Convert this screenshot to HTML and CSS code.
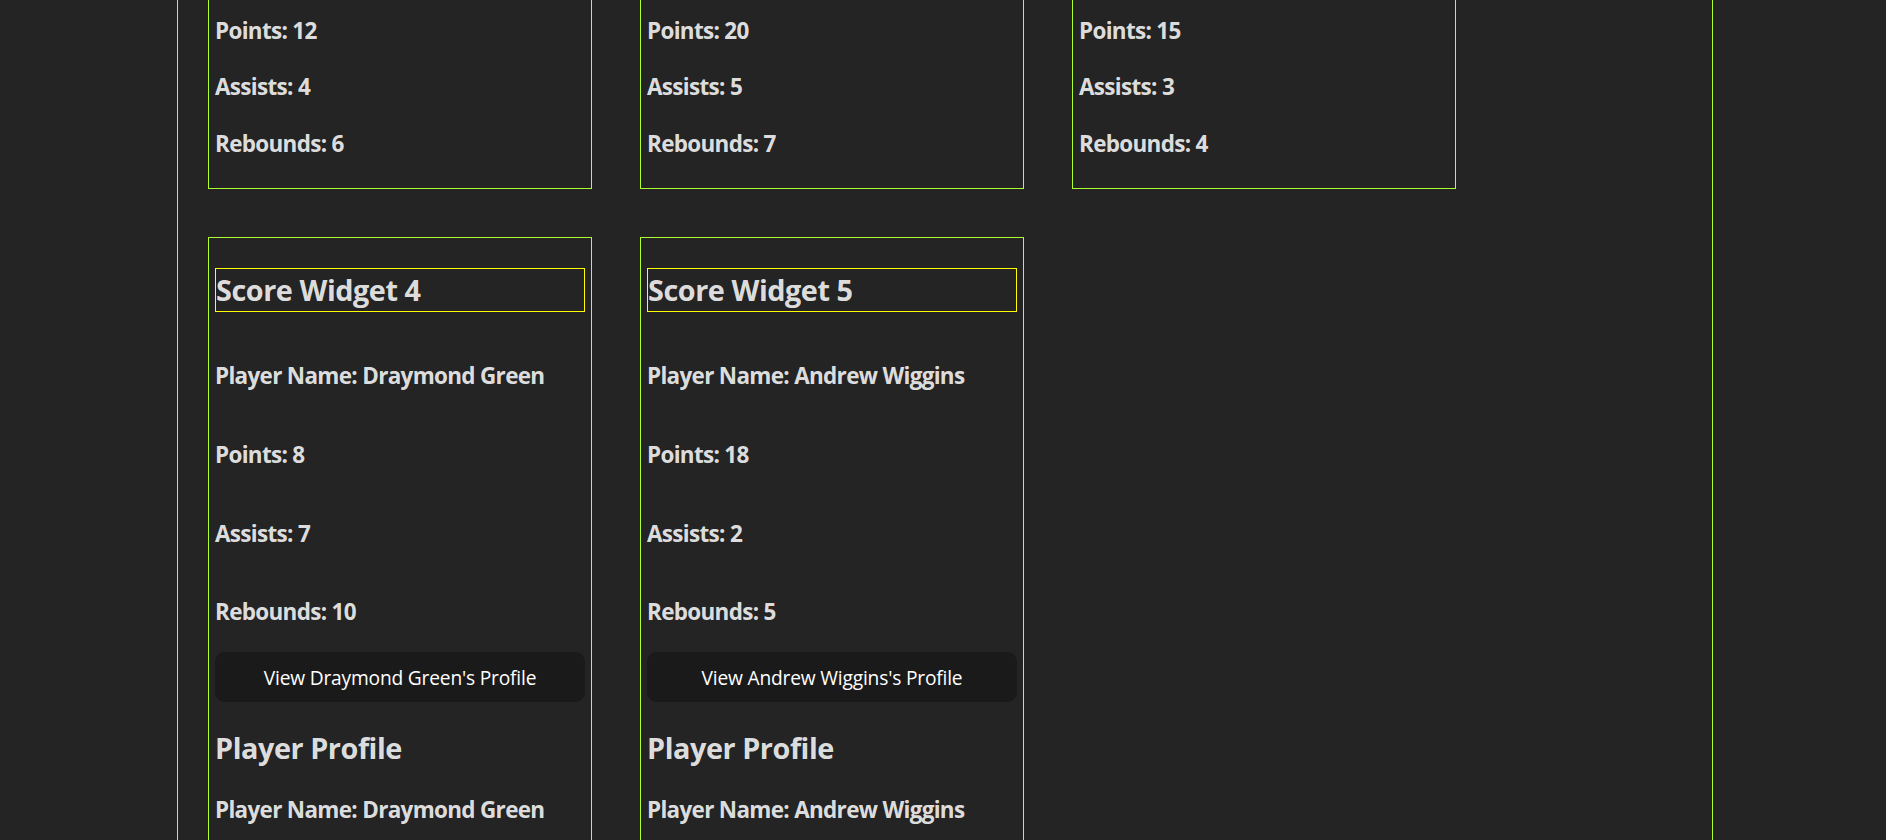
FILE: index.html
```html
<!DOCTYPE html>
<html lang="en">
<head>
<meta charset="utf-8">
<title>Score Widgets</title>
<link rel="stylesheet" href="styles.css">
</head>
<body>
<div class="app">
  <div class="grid">
    <div class="card">
      <h2 class="title">Score Widget 1</h2>
      <h3 class="stat">Player Name: Stephen Curry</h3>
      <h3 class="stat">Points: 12</h3>
      <h3 class="stat">Assists: 4</h3>
      <h3 class="stat">Rebounds: 6</h3>
    </div>
    <div class="card">
      <h2 class="title">Score Widget 2</h2>
      <h3 class="stat">Player Name: Klay Thompson</h3>
      <h3 class="stat">Points: 20</h3>
      <h3 class="stat">Assists: 5</h3>
      <h3 class="stat">Rebounds: 7</h3>
    </div>
    <div class="card">
      <h2 class="title">Score Widget 3</h2>
      <h3 class="stat">Player Name: Jordan Poole</h3>
      <h3 class="stat">Points: 15</h3>
      <h3 class="stat">Assists: 3</h3>
      <h3 class="stat">Rebounds: 4</h3>
    </div>
    <div class="card card-open">
      <h2 class="title">Score Widget 4</h2>
      <h3 class="stat">Player Name: Draymond Green</h3>
      <h3 class="stat">Points: 8</h3>
      <h3 class="stat">Assists: 7</h3>
      <h3 class="stat">Rebounds: 10</h3>
      <button class="profile-btn" type="button">View Draymond Green's Profile</button>
      <div class="profile">
        <h2 class="profile-title">Player Profile</h2>
        <h3 class="profile-stat">Player Name: Draymond Green</h3>
        <h3 class="profile-stat">Points: 8</h3>
        <h3 class="profile-stat">Assists: 7</h3>
        <h3 class="profile-stat">Rebounds: 10</h3>
      </div>
    </div>
    <div class="card card-open">
      <h2 class="title">Score Widget 5</h2>
      <h3 class="stat">Player Name: Andrew Wiggins</h3>
      <h3 class="stat">Points: 18</h3>
      <h3 class="stat">Assists: 2</h3>
      <h3 class="stat">Rebounds: 5</h3>
      <button class="profile-btn" type="button">View Andrew Wiggins's Profile</button>
      <div class="profile">
        <h2 class="profile-title">Player Profile</h2>
        <h3 class="profile-stat">Player Name: Andrew Wiggins</h3>
        <h3 class="profile-stat">Points: 18</h3>
        <h3 class="profile-stat">Assists: 2</h3>
        <h3 class="profile-stat">Rebounds: 5</h3>
      </div>
    </div>
  </div>
</div>
</body>
</html>
```
FILE: styles.css
```css
html, body {
  margin: 0;
  padding: 0;
}
body {
  background: #242424;
  color: rgba(255, 255, 255, 0.87);
  font-family: "Open Sans", "Noto Sans", sans-serif;
  font-size: 19.2px;
  line-height: 1.5;
  overflow: hidden;
}
.app {
  box-sizing: border-box;
  width: 1536px;
  margin: -173px 0 0 177px;
  padding: 30px 0 0 30px;
  border: 1px solid #adff2f;
  min-height: 1200px;
}
.grid {
  display: flex;
  flex-wrap: wrap;
  align-items: flex-start;
  column-gap: 48px;
  row-gap: 48px;
  width: 1300px;
}
.card {
  box-sizing: border-box;
  width: 384px;
  border: 1px solid #adff2f;
  padding: 6px;
}
.title {
  font-size: 28.8px;
  line-height: 42px;
  margin: 24px 0;
  border: 1px solid #ffff00;
  font-weight: 700;
  letter-spacing: -0.015em;
}
.card-open .title {
  margin-bottom: 45.5px;
}
.stat {
  font-size: 22.46px;
  line-height: 33.7px;
  padding-top: 1px;
  margin: 21.5px 0;
  font-weight: 700;
  letter-spacing: -0.03em;
}
.card-open .stat {
  padding-top: 2px;
  margin: 43px 0 20.5px;
}
.profile-btn {
  display: block;
  box-sizing: border-box;
  width: 100%;
  height: 50px;
  margin-top: 23px;
  padding: 0 23px;
  border: 1px solid transparent;
  border-radius: 9.6px;
  background: #1a1a1a;
  color: #ffffff;
  font-family: inherit;
  font-size: 19.2px;
  font-weight: 500;
  letter-spacing: -0.01em;
  line-height: 25px;
  cursor: pointer;
}
.profile-title {
  font-size: 28.8px;
  line-height: 43.2px;
  margin: 24px 0;
  font-weight: 700;
  letter-spacing: -0.015em;
}
.profile-stat {
  font-size: 22.46px;
  line-height: 33.7px;
  margin: 22.5px 0;
  font-weight: 700;
  letter-spacing: -0.03em;
}
```
